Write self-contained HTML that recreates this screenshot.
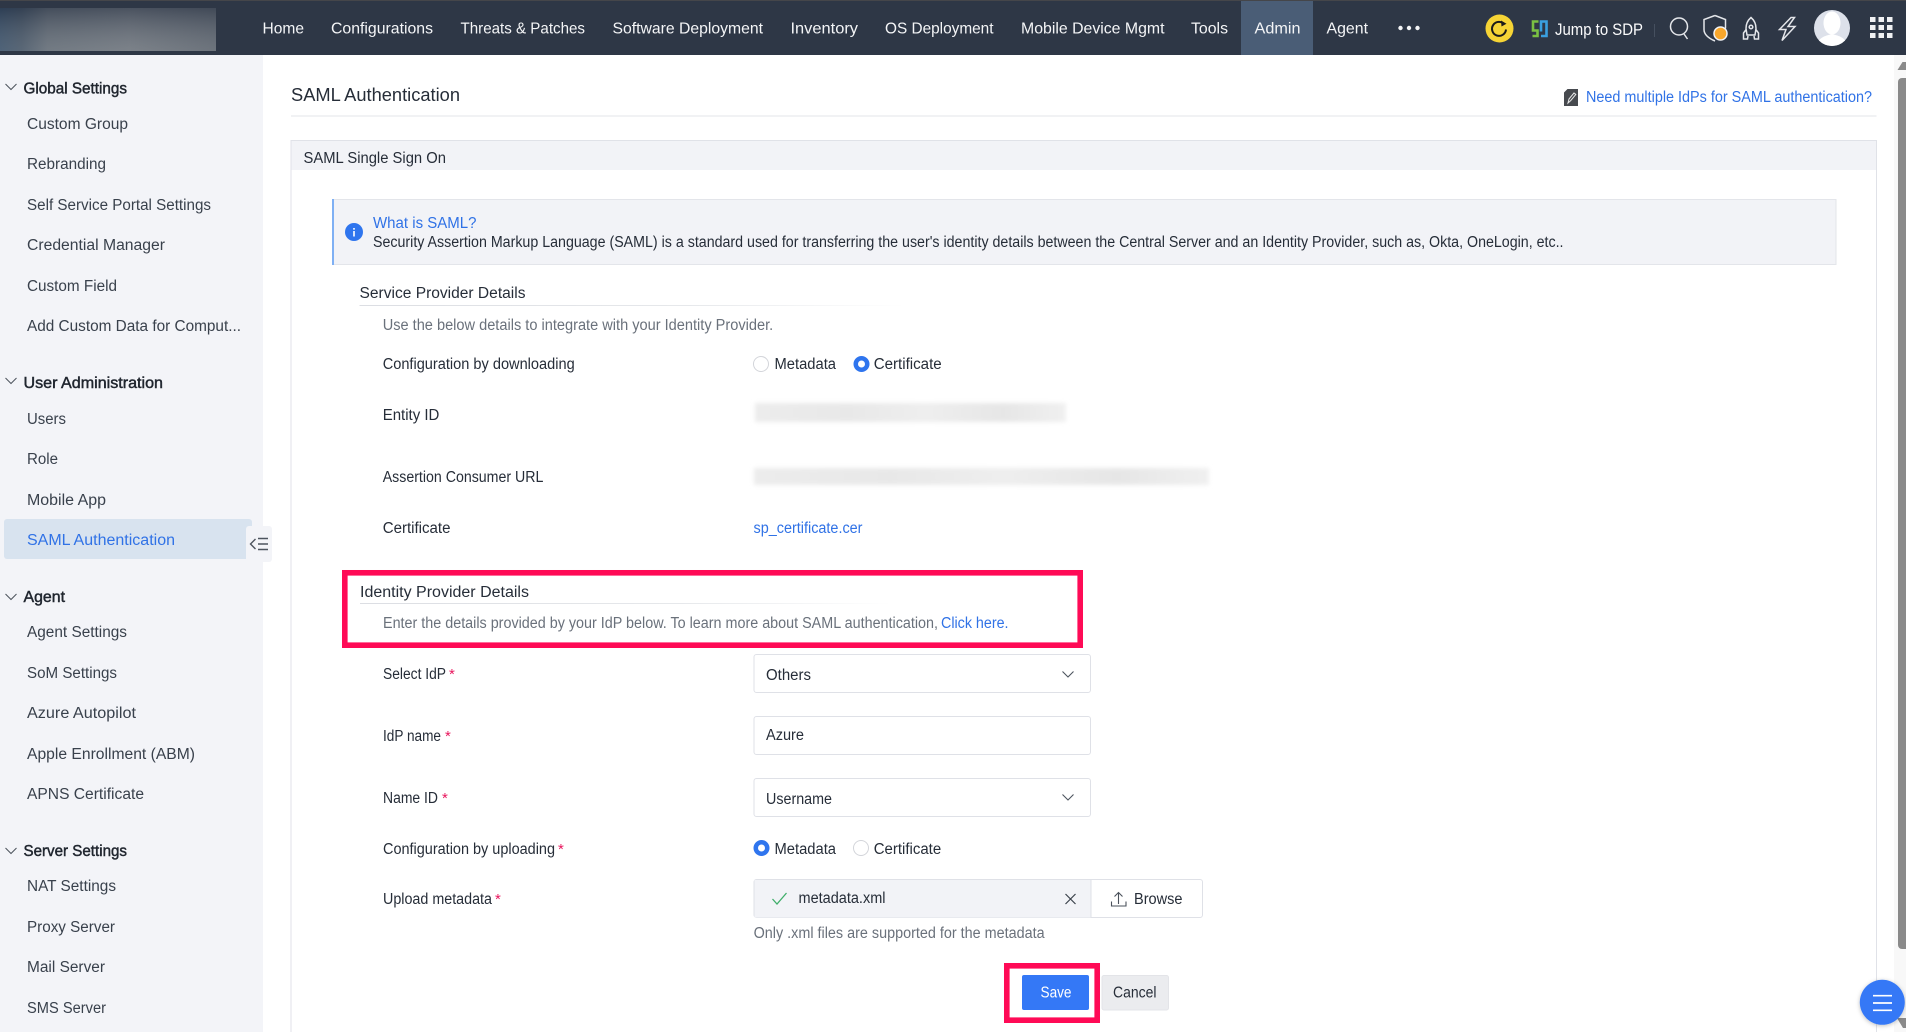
<!DOCTYPE html>
<html lang="en"><head><meta charset="utf-8"><title>SAML Authentication</title>
<style>
html,body{margin:0;padding:0;width:1906px;height:1032px;overflow:hidden;background:#fff}
svg{display:block}
text{font-family:"Liberation Sans",sans-serif;font-size:15.5px;fill:#262d38;white-space:pre}
.n{font-size:16px;fill:#f4f5f7}
.s{fill:#39414c}
.h{fill:#20262f;stroke:#20262f;stroke-width:.45px}
.b{fill:#3072e6}
.g{fill:#6a717b}
.r{fill:#e8175d;font-size:15px}
</style></head><body>
<svg width="1906" height="1032" viewBox="0 0 1906 1032" xmlns="http://www.w3.org/2000/svg">
<defs>
<linearGradient id="lg" x1="0" x2="1" y1="0" y2="0"><stop offset="0" stop-color="#2c4763"/><stop offset=".1" stop-color="#3b4d60"/><stop offset=".22" stop-color="#5f6973"/><stop offset=".6" stop-color="#6c737b"/><stop offset="1" stop-color="#575f69"/></linearGradient>
<linearGradient id="lv" x1="0" x2="0" y1="0" y2="1"><stop offset="0" stop-color="#2e3748" stop-opacity=".55"/><stop offset="1" stop-color="#a0a4aa" stop-opacity=".3"/></linearGradient>
<linearGradient id="fade1" x1="0" x2="1" y1="0" y2="0"><stop offset="0" stop-color="#dcdee3"/><stop offset=".6" stop-color="#e6e8eb"/><stop offset="1" stop-color="#fff"/></linearGradient>
<linearGradient id="bg" x1="0" x2="1" y1="0" y2="0"><stop offset="0" stop-color="#ececec"/><stop offset=".3" stop-color="#e8e8e8"/><stop offset=".55" stop-color="#eeeeee"/><stop offset=".8" stop-color="#e6e6e6"/><stop offset="1" stop-color="#f0f0f0"/></linearGradient>
<filter id="bl" x="-5%" y="-40%" width="110%" height="180%"><feGaussianBlur stdDeviation="2"/></filter>
<filter id="sh" x="-30%" y="-30%" width="160%" height="160%"><feDropShadow dx="0" dy="1" stdDeviation="2" flood-color="#000" flood-opacity=".25"/></filter>
</defs>

<!-- top bar -->
<rect width="1906" height="55" fill="#2e3746"/>
<rect width="1906" height="1" fill="#45464a"/>
<rect y="8" width="216" height="43" fill="url(#lg)"/>
<rect y="8" width="216" height="43" fill="url(#lv)"/>
<rect x="1241" y="1" width="72" height="54" fill="#4a5d76"/>
<text class="n" x="262.500" y="33.500" textLength="41.500" lengthAdjust="spacingAndGlyphs">Home</text>
<text class="n" x="331" y="33.500" textLength="102" lengthAdjust="spacingAndGlyphs">Configurations</text>
<text class="n" x="460.500" y="33.500" textLength="124.500" lengthAdjust="spacingAndGlyphs">Threats &amp; Patches</text>
<text class="n" x="612.500" y="33.500" textLength="150.500" lengthAdjust="spacingAndGlyphs">Software Deployment</text>
<text class="n" x="790.500" y="33.500" textLength="67.500" lengthAdjust="spacingAndGlyphs">Inventory</text>
<text class="n" x="885" y="33.500" textLength="108.500" lengthAdjust="spacingAndGlyphs">OS Deployment</text>
<text class="n" x="1021" y="33.500" textLength="143.500" lengthAdjust="spacingAndGlyphs">Mobile Device Mgmt</text>
<text class="n" x="1191" y="33.500" textLength="37" lengthAdjust="spacingAndGlyphs">Tools</text>
<text class="n" x="1254.500" y="33.500" textLength="46" lengthAdjust="spacingAndGlyphs">Admin</text>
<text class="n" x="1326.500" y="33.500" textLength="41.500" lengthAdjust="spacingAndGlyphs">Agent</text>
<g fill="#f4f5f7"><circle cx="1400.500" cy="28" r="2.200"/><circle cx="1409" cy="28" r="2.200"/><circle cx="1417.500" cy="28" r="2.200"/></g>

<circle cx="1499.500" cy="28.500" r="14" fill="#f6d435"/>
<path d="M1504.500 24.500a7 7 0 1 0 1.500 5" fill="none" stroke="#1b1b1b" stroke-width="2"/>
<path d="M1501 20.500l5.500 3.200-5 2.800z" fill="#1b1b1b"/>

<path d="M1538.500 21.500h-5.500v9h4.500v5.500h-5" fill="none" stroke="#7ac143" stroke-width="2.600"/>
<path d="M1541 36h5.500v-14.500h-5.500v10" fill="none" stroke="#3aa0e0" stroke-width="2.600"/>
<text x="1555" y="35" textLength="88" lengthAdjust="spacingAndGlyphs" style="font-size:16.500px;fill:#fbfbfc">Jump to SDP</text>
<rect x="1654" y="24" width="1" height="13" fill="#46505f"/>

<g fill="none" stroke="#e4e6ea" stroke-width="1.500">
<circle cx="1679" cy="26.500" r="8.500"/><path d="M1684 34l3.500 5"/>
<path d="M1715 15.500l10.500 4v9M1715 15.500l-11 4v10c0 5 4 8.500 11 11.500"/>
<path d="M1751 17.500c3.500 3 5 6.500 5 11l-1 6.500h-8l-1-6.500c0-4.500 1.500-8 5-11zM1746.500 29l-3 4v6h4l.5-3M1755.500 29l3 4v6h-4l-.5-3"/><circle cx="1751" cy="27" r="1.800"/>
<path d="M1791 17.500l-11.500 12h6.500l-4 11 13-14h-7l6.500-9z"/>
</g>
<circle cx="1720.500" cy="33.500" r="6.500" fill="#f9a72b" stroke="#f2f3f5" stroke-width="1.500"/>
<clipPath id="av"><circle cx="1832" cy="28" r="18"/></clipPath>
<circle cx="1832" cy="28" r="18" fill="#dde1ea"/>
<g clip-path="url(#av)" fill="#fff"><ellipse cx="1832" cy="23" rx="8.500" ry="11.500"/><path d="M1817 48c0-10 7-12 15-14 8 2 15 4 15 14z"/></g>
<g fill="#f0f1f3">
<rect x="1870" y="17" width="5.500" height="5"/><rect x="1878.500" y="17" width="5.500" height="5"/><rect x="1887" y="17" width="5.500" height="5"/>
<rect x="1870" y="25" width="5.500" height="5"/><rect x="1878.500" y="25" width="5.500" height="5"/><rect x="1887" y="25" width="5.500" height="5"/>
<rect x="1870" y="33" width="5.500" height="5"/><rect x="1878.500" y="33" width="5.500" height="5"/><rect x="1887" y="33" width="5.500" height="5"/>
</g>

<!-- sidebar -->
<rect y="55" width="263" height="977" fill="#f3f4f8"/>
<g fill="none" stroke="#4b525c" stroke-width="1"><path d="M5.500 84l5.500 5.500 5.500-5.500"/><path d="M5.500 378l5.500 5.500 5.500-5.500"/><path d="M5.500 594l5.500 5.500 5.500-5.500"/><path d="M5.500 848l5.500 5.500 5.500-5.500"/></g>
<text class="s h" x="23.500" y="93.500" textLength="103.500" lengthAdjust="spacingAndGlyphs">Global Settings</text>
<text class="s" x="27" y="129" textLength="101" lengthAdjust="spacingAndGlyphs">Custom Group</text>
<text class="s" x="27" y="169" textLength="79" lengthAdjust="spacingAndGlyphs">Rebranding</text>
<text class="s" x="27" y="210" textLength="184" lengthAdjust="spacingAndGlyphs">Self Service Portal Settings</text>
<text class="s" x="27" y="250" textLength="138" lengthAdjust="spacingAndGlyphs">Credential Manager</text>
<text class="s" x="27" y="291" textLength="90" lengthAdjust="spacingAndGlyphs">Custom Field</text>
<text class="s" x="27" y="331" textLength="214" lengthAdjust="spacingAndGlyphs">Add Custom Data for Comput...</text>
<text class="s h" x="23.500" y="388" textLength="139.500" lengthAdjust="spacingAndGlyphs">User Administration</text>
<text class="s" x="27" y="424" textLength="39" lengthAdjust="spacingAndGlyphs">Users</text>
<text class="s" x="27" y="464" textLength="31" lengthAdjust="spacingAndGlyphs">Role</text>
<text class="s" x="27" y="505" textLength="79" lengthAdjust="spacingAndGlyphs">Mobile App</text>
<rect x="4" y="519" width="248" height="40" rx="3" fill="#d8e3ef"/>
<text class="b" x="27" y="545" textLength="148" lengthAdjust="spacingAndGlyphs">SAML Authentication</text>
<rect x="246" y="526" width="26" height="36" rx="3" fill="#f3f4f8"/>
<g fill="none" stroke="#4d545e" stroke-width="1.400"><path d="M255.500 539l-5 5 5 5"/><path d="M258 538.500h10M258 544h10M258 549.500h10"/></g>
<text class="s h" x="23.500" y="602" textLength="41.500" lengthAdjust="spacingAndGlyphs">Agent</text>
<text class="s" x="27" y="637" textLength="100" lengthAdjust="spacingAndGlyphs">Agent Settings</text>
<text class="s" x="27" y="678" textLength="90" lengthAdjust="spacingAndGlyphs">SoM Settings</text>
<text class="s" x="27" y="718" textLength="109" lengthAdjust="spacingAndGlyphs">Azure Autopilot</text>
<text class="s" x="27" y="759" textLength="168" lengthAdjust="spacingAndGlyphs">Apple Enrollment (ABM)</text>
<text class="s" x="27" y="799" textLength="117" lengthAdjust="spacingAndGlyphs">APNS Certificate</text>
<text class="s h" x="23.500" y="856" textLength="103.500" lengthAdjust="spacingAndGlyphs">Server Settings</text>
<text class="s" x="27" y="891" textLength="89" lengthAdjust="spacingAndGlyphs">NAT Settings</text>
<text class="s" x="27" y="932" textLength="88" lengthAdjust="spacingAndGlyphs">Proxy Server</text>
<text class="s" x="27" y="972" textLength="78" lengthAdjust="spacingAndGlyphs">Mail Server</text>
<text class="s" x="27" y="1013" textLength="79" lengthAdjust="spacingAndGlyphs">SMS Server</text>

<!-- header -->
<text x="291" y="101" textLength="169" lengthAdjust="spacingAndGlyphs" style="font-size:18px">SAML Authentication</text>
<rect x="291" y="115.500" width="1585.500" height="1" fill="#e3e5ea"/>
<path d="M1567.500 89h10.500v17h-14v-13.500z" fill="#474a4f"/>
<path d="M1568 103l1-4 5-6 1.800 1.500-5 6z" fill="none" stroke="#e8e8e8" stroke-width="1"/>
<text class="b" x="1586" y="102" textLength="286" lengthAdjust="spacingAndGlyphs">Need multiple IdPs for SAML authentication?</text>

<!-- panel -->
<rect x="291" y="140.500" width="1585.500" height="29.500" fill="#f2f3f7"/>
<path d="M291 1032V140.500H1876.500V1032" fill="none" stroke="#e0e2e8" stroke-width="1"/>
<text x="303.500" y="163" textLength="142.500" lengthAdjust="spacingAndGlyphs">SAML Single Sign On</text>

<rect x="332.500" y="199.500" width="1503.500" height="65" fill="#f2f3f7" stroke="#e3e5ea"/>
<rect x="332" y="199" width="2" height="66" fill="#7fb0f4"/>
<circle cx="354" cy="232" r="9" fill="#2f75ee"/>
<rect x="353.200" y="231" width="1.600" height="5.500" fill="#fff"/><rect x="353.200" y="228" width="1.600" height="1.700" fill="#fff"/>
<text class="b" x="373" y="228" textLength="103.500" lengthAdjust="spacingAndGlyphs">What is SAML?</text>
<text x="373" y="247" textLength="1190.500" lengthAdjust="spacingAndGlyphs">Security Assertion Markup Language (SAML) is a standard used for transferring the user's identity details between the Central Server and an Identity Provider, such as, Okta, OneLogin, etc..</text>

<text x="359.500" y="298" textLength="166" lengthAdjust="spacingAndGlyphs">Service Provider Details</text>
<rect x="359.500" y="305" width="545" height="1" fill="url(#fade1)"/>
<text class="g" x="382.700" y="330" textLength="390.500" lengthAdjust="spacingAndGlyphs">Use the below details to integrate with your Identity Provider.</text>

<text x="382.700" y="369" textLength="192" lengthAdjust="spacingAndGlyphs">Configuration by downloading</text>
<circle cx="761" cy="364" r="7.500" fill="#fff" stroke="#d3d5da"/>
<text x="774.500" y="369" textLength="61.500" lengthAdjust="spacingAndGlyphs">Metadata</text>
<circle cx="861.500" cy="364" r="8" fill="#2f75ee"/><circle cx="861.500" cy="364" r="3.500" fill="#fff"/>
<text x="873.700" y="369" textLength="68" lengthAdjust="spacingAndGlyphs">Certificate</text>

<text x="382.700" y="420" textLength="56.700" lengthAdjust="spacingAndGlyphs">Entity ID</text>
<rect x="755" y="403" width="311" height="19" fill="url(#bg)" filter="url(#bl)"/>
<text x="382.700" y="482" textLength="160.700" lengthAdjust="spacingAndGlyphs">Assertion Consumer URL</text>
<rect x="754" y="468" width="455" height="17" fill="url(#bg)" filter="url(#bl)"/>
<text x="382.700" y="533" textLength="67.800" lengthAdjust="spacingAndGlyphs">Certificate</text>
<text class="b" x="753.500" y="533" textLength="109" lengthAdjust="spacingAndGlyphs">sp_certificate.cer</text>

<!-- idp highlight -->
<rect x="344.800" y="572.800" width="735.400" height="72.400" fill="none" stroke="#ff0a56" stroke-width="5.600"/>
<text x="360" y="597" textLength="169" lengthAdjust="spacingAndGlyphs">Identity Provider Details</text>
<rect x="360" y="603" width="532" height="1" fill="url(#fade1)"/>
<text class="g" x="383" y="628" textLength="555" lengthAdjust="spacingAndGlyphs">Enter the details provided by your IdP below. To learn more about SAML authentication,</text>
<text class="b" x="941" y="628" textLength="67.500" lengthAdjust="spacingAndGlyphs">Click here.</text>

<text x="383" y="679" textLength="63" lengthAdjust="spacingAndGlyphs">Select IdP</text><text class="r" x="449" y="679">*</text>
<rect x="754" y="654.500" width="336.500" height="38" rx="2.500" fill="#fff" stroke="#dfe1e7"/>
<text x="766" y="680" textLength="45" lengthAdjust="spacingAndGlyphs">Others</text>
<path d="M1062.500 671.500l5.500 5.500 5.500-5.500" fill="none" stroke="#4d545e" stroke-width="1.100"/>

<text x="383" y="741" textLength="58" lengthAdjust="spacingAndGlyphs">IdP name</text><text class="r" x="445" y="741">*</text>
<rect x="754" y="716.500" width="336.500" height="38" rx="2.500" fill="#fff" stroke="#dfe1e7"/>
<text x="766" y="740" textLength="38" lengthAdjust="spacingAndGlyphs">Azure</text>

<text x="383" y="803" textLength="55" lengthAdjust="spacingAndGlyphs">Name ID</text><text class="r" x="442" y="803">*</text>
<rect x="754" y="778.500" width="336.500" height="38" rx="2.500" fill="#fff" stroke="#dfe1e7"/>
<text x="766" y="804" textLength="66" lengthAdjust="spacingAndGlyphs">Username</text>
<path d="M1062.500 794.500l5.500 5.500 5.500-5.500" fill="none" stroke="#4d545e" stroke-width="1.100"/>

<text x="383" y="854" textLength="172" lengthAdjust="spacingAndGlyphs">Configuration by uploading</text><text class="r" x="558" y="854">*</text>
<circle cx="761.500" cy="848" r="8" fill="#2f75ee"/><circle cx="761.500" cy="848" r="3.500" fill="#fff"/>
<text x="774.500" y="854" textLength="61.500" lengthAdjust="spacingAndGlyphs">Metadata</text>
<circle cx="861" cy="848" r="7.500" fill="#fff" stroke="#d3d5da"/>
<text x="873.700" y="854" textLength="67.500" lengthAdjust="spacingAndGlyphs">Certificate</text>

<text x="383" y="904" textLength="109" lengthAdjust="spacingAndGlyphs">Upload metadata</text><text class="r" x="495" y="904">*</text>
<rect x="754" y="879.500" width="448.500" height="38" rx="2.500" fill="#fff" stroke="#dfe1e7"/>
<path d="M754.500 880h336v37.500h-336z" fill="#f2f3f7"/>
<rect x="1090.500" y="880" width="1" height="37.500" fill="#dfe1e7"/>
<path d="M772.500 899l4.500 5 9.500-11" fill="none" stroke="#3fae6a" stroke-width="1.300"/>
<text x="798.500" y="903" textLength="87" lengthAdjust="spacingAndGlyphs">metadata.xml</text>
<path d="M1065.500 894l10 10M1075.500 894l-10 10" fill="none" stroke="#3a414b" stroke-width="1.200"/>
<g fill="none" stroke="#4a515b" stroke-width="1.100"><path d="M1118.500 904v-11M1114.500 896.500l4-4 4 4M1111.500 901.500v4.500h14.500v-4.500"/></g>
<text x="1134" y="904" textLength="48.500" lengthAdjust="spacingAndGlyphs">Browse</text>
<text class="g" x="753.600" y="938" textLength="291" lengthAdjust="spacingAndGlyphs">Only .xml files are supported for the metadata</text>

<!-- buttons -->
<rect x="1006.800" y="965.800" width="90.400" height="54.400" fill="#fff" stroke="#ff0a56" stroke-width="5.600"/>
<rect x="1022" y="975" width="67" height="35" rx="2" fill="#3478f6"/>
<text x="1040.500" y="997.500" textLength="31" lengthAdjust="spacingAndGlyphs" style="fill:#fff">Save</text>
<rect x="1102" y="975.500" width="66.500" height="34.500" rx="2" fill="#ebecef" stroke="#e3e4e8"/>
<text x="1113" y="997.500" textLength="43.500" lengthAdjust="spacingAndGlyphs">Cancel</text>

<!-- scrollbar -->
<rect x="1894" y="55" width="12" height="977" fill="#f8f8f8"/>
<path d="M1897.500 70l5-8 3.500 0v8z" fill="#8a8a8a"/>
<rect x="1898" y="78" width="12" height="871" rx="4" fill="#8a8a8a"/>
<path d="M1897 1018h9v10h-3z" fill="#8a8a8a"/>
<circle cx="1882.300" cy="1002.300" r="22.500" fill="#3478f6" filter="url(#sh)"/>
<path d="M1873 995.700h19M1873 1003h19M1873 1010.300h19" stroke="#fff" stroke-width="1.700"/>
</svg>
</body></html>
